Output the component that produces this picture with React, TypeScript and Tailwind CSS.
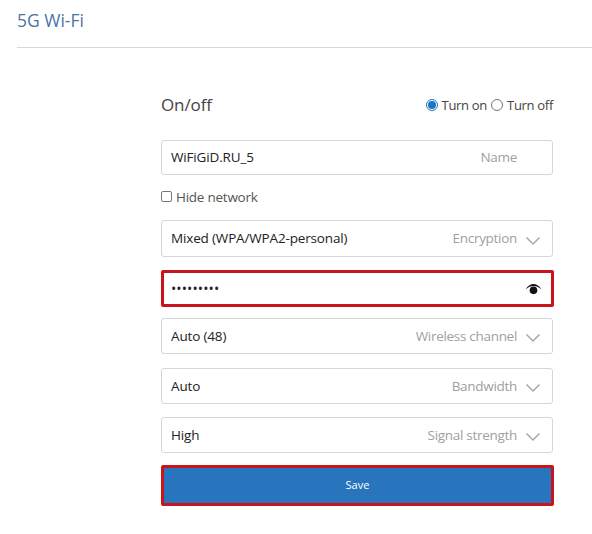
import React from "react";

function Chevron() {
  return (
    <svg width="16" height="10" viewBox="0 0 16 10" className="ml-[8px] mt-[4px] shrink-0" fill="none">
      <path d="M1.5 1.5 L8 8 L14.5 1.5" stroke="#a8a8a8" strokeWidth="1.5" />
    </svg>
  );
}

function Field({ value, label, h, mt, chevron = true }: { value: string; label: string; h: string; mt: string; chevron?: boolean }) {
  return (
    <div className={`flex items-center w-[392px] rounded-[3px] border border-[#d6d6d6] pl-[9px] pr-[11px] text-[13.5px] ${h} ${mt}`}>
      <span className="text-[#222222] tracking-[-0.16px]">{value}</span>
      <span className={`ml-auto text-[#a0a0a0] tracking-[-0.3px] ${chevron ? "" : "mr-[24px]"}`}>{label}</span>
      {chevron && <Chevron />}
    </div>
  );
}

export default function App() {
  return (
    <div className="w-[592px] h-[534px] bg-white overflow-hidden font-['Open_Sans','Noto_Sans',sans-serif]">
      <div className="pl-[17px] pt-[8px]">
        <div className="text-[17.5px] leading-[24px] text-[#4a74a3]">5G Wi-Fi</div>
        <div className="mt-[15px] h-px bg-[#d9d9d9]" />
      </div>
      <div className="pl-[161px] w-[592px]">
        <div className="flex items-center justify-between w-[392px] h-[24px] mt-[45px]">
          <span className="text-[17px] text-[#444444] tracking-[-0.1px]">On/off</span>
          <div className="flex items-center pt-[2px] text-[13px] tracking-[-0.3px] text-[#444444]">
            <span className="flex items-center justify-center w-[12px] h-[12px] rounded-full border border-[#2273c0] mr-[4px] -mt-[3px]">
              <span className="block w-[8px] h-[8px] rounded-full bg-[#1a73c4]" />
            </span>
            <span>Turn on</span>
            <span className="block w-[12px] h-[12px] rounded-full border border-[#767676] mx-[4px] -mt-[3px]" />
            <span>Turn off</span>
          </div>
        </div>
        <Field value="WiFiGiD.RU_5" label="Name" h="h-[35px]" mt="mt-[23px]" chevron={false} />
        <div className="flex items-center h-[20px] mt-[12px] text-[13.5px] tracking-[-0.25px] text-[#555555]">
          <span className="block w-[11px] h-[11px] rounded-[2px] border border-[#767676] mr-[4px] -mt-[1px]" />
          Hide network
        </div>
        <Field value="Mixed (WPA/WPA2-personal)" label="Encryption" h="h-[37px]" mt="mt-[13px]" />
        <div className="flex items-center w-[393px] h-[37px] mt-[13px] rounded-[2px] border-[3px] border-[#c9141b] pl-[7px] pr-[9px]">
          <span className="text-[#222222] text-[14px] tracking-[0.1px] leading-none">•••••••••</span>
          <svg width="17" height="13" viewBox="0 0 16 12" className="ml-auto mt-[2px]">
            <path d="M0.5 6 C3 2 5.5 0.8 8 0.8 C10.5 0.8 13 2 15.5 6 C13 3.6 10.5 2.6 8 2.6 C5.5 2.6 3 3.6 0.5 6 Z" fill="#111111" />
            <circle cx="8" cy="6.8" r="3.6" fill="#111111" />
          </svg>
        </div>
        <Field value="Auto (48)" label="Wireless channel" h="h-[36px]" mt="mt-[11px]" />
        <Field value="Auto" label="Bandwidth" h="h-[36px]" mt="mt-[14px]" />
        <Field value="High" label="Signal strength" h="h-[36px]" mt="mt-[13px]" />
        <button className="flex items-center justify-center w-[393px] h-[41px] mt-[12px] rounded-[2px] border-[3px] border-[#c9141b] bg-[#2874bd] text-white text-[11px]">
          Save
        </button>
      </div>
    </div>
  );
}
